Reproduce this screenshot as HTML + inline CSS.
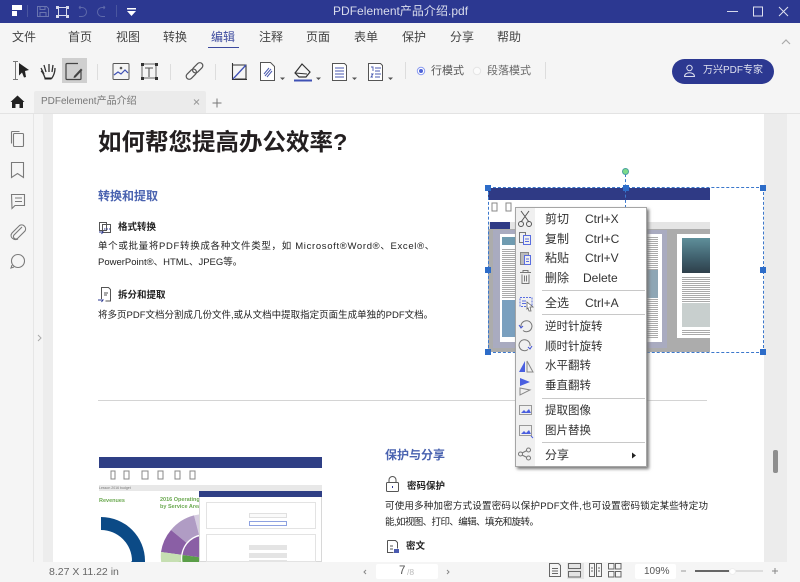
<!DOCTYPE html>
<html><head><meta charset="utf-8"><style>
html,body{margin:0;padding:0}
body{width:800px;height:582px;position:relative;overflow:hidden;background:#f5f5f5;font-family:"Liberation Sans","Noto Sans CJK SC",sans-serif;color:#333}
.a{position:absolute;white-space:nowrap}
.m{top:29px;font-size:12px;line-height:17px;color:#444}
svg{position:absolute;overflow:visible}
.c{left:545px;font-size:12px;line-height:16px;color:#333}
.k{font-size:12px;line-height:16px;color:#333}
.sep{position:absolute;left:542px;width:103px;height:1px;background:#c8c8c8}
.h{position:absolute;width:6px;height:6px;background:#2d6cc8}
.p{font-size:9.5px;line-height:17px;color:#222}
.s{font-size:9.5px;line-height:17px;font-weight:bold;color:#222}
.ln{background-image:repeating-linear-gradient(#fff 0 1px,#aaa 1px 2px)}
</style></head><body>

<!-- title bar -->
<div class="a" style="left:0;top:0;width:800px;height:23px;background:#2c3891"></div>
<svg style="left:0;top:0" width="800" height="24" fill="none">
<path d="M12 5h10v5H12zM12 11h5v5h-5z" fill="#fff"/>
<path d="M27.500 5v12M116.500 5v12" stroke="#4a569f"/>
<path d="M37.500 6.500h9l2 2v8h-11zM40 6.500v3h5v-3M40 16.500v-4h6v4" stroke="#6a75b0"/>
<path d="M58 7.500h9M58 15.500h9M58.500 7v9M66.500 7v9" stroke="#d8dbec"/>
<path d="M56 6h3v3h-3zM66 6h3v3h-3zM56 15h3v3h-3zM66 15h3v3h-3z" fill="#d8dbec"/>
<path d="M79 7.500h3a4.500 4.500 0 0 1 0 9h-3M79 7.500l1.500-1.500M79 7.500l1.500 1.500" stroke="#5e69aa"/>
<path d="M105 7.500h-3a4.500 4.500 0 0 0 0 9h3M105 7.500l-1.500-1.500M105 7.500l-1.500 1.500" stroke="#5e69aa"/>
<path d="M127 8h9v1.500h-9zM127 11h9l-4.500 5z" fill="#fff"/>
<path d="M727 11.500h11" stroke="#d5d8ea"/>
<rect x="753.500" y="7" width="9" height="9" stroke="#dfe1ef"/>
<path d="M779 7l9 9M788 7l-9 9" stroke="#dfe1ef"/>
</svg>
<div class="a" style="left:333px;top:3px;font-size:12px;line-height:17px;letter-spacing:.02px;color:#d9dcec">PDFelement产品介绍.pdf</div>

<!-- menu -->
<div class="a m" style="left:12px">文件</div>
<div class="a m" style="left:68px">首页</div>
<div class="a m" style="left:116px">视图</div>
<div class="a m" style="left:163px">转换</div>
<div class="a m" style="left:211px;color:#3d4a9e">编辑</div>
<div class="a" style="left:208px;top:47px;width:31px;height:1px;background:#3d4a9e"></div>
<div class="a m" style="left:259px">注释</div>
<div class="a m" style="left:306px">页面</div>
<div class="a m" style="left:354px">表单</div>
<div class="a m" style="left:402px">保护</div>
<div class="a m" style="left:450px">分享</div>
<div class="a m" style="left:497px">帮助</div>
<svg style="left:780px;top:38px" width="16" height="10" fill="none"><path d="M2 6l4-4 4 4" stroke="#aaa" stroke-width="1.200"/></svg>

<!-- toolbar -->
<div class="a" style="left:62px;top:58px;width:25px;height:25px;background:#cfcfcf"></div>
<svg style="left:0;top:50px" width="620" height="40" fill="none">
<path d="M15.500 12v17M13 11.500h5M13 29.500h5" stroke="#777"/>
<path d="M19 13l10 7-4 1 1 6-2 .5-2-5-3 3z" fill="#222"/>
<path d="M41 21c2 1 3 4 4 7 1 1 6 1 7 0 2-3 3-7 3-10M44 24l-3-6M46 22l-2-7M49 22v-8M52 22l1-7" stroke="#333" stroke-width="1.300"/>
<path d="M44.500 28.500h7" stroke="#222" stroke-width="2"/>
<path d="M78 13.500H67a1 1 0 0 0-1 1v14a1 1 0 0 0 1 1h13a1 1 0 0 0 1-1v-8" stroke="#444" stroke-width="1.200"/>
<path d="M74 26l7-7.500 1.500 1.500-7 7.500-2 .5z" fill="#444"/>
<path d="M97.500 14v16M170.500 14v16M215.500 14v16" stroke="#ddd"/>
<rect x="113" y="13.500" width="16" height="16" rx="1" stroke="#555"/>
<path d="M114 25l4-3 3 2 4-4 3 3" stroke="#3f51b5" stroke-width="1.200"/><circle cx="121" cy="18" r="1.300" fill="#555"/>
<path d="M142 14h14M142 28h14M142 14v14M156 14v14" stroke="#666"/>
<path d="M141 13h3v3h-3zM155 13h3v3h-3zM141 27h3v3h-3zM155 27h3v3h-3z" fill="#333"/>
<path d="M145 18h8M149 18v9" stroke="#555" stroke-width="1.100"/>
<g transform="rotate(-45 194.500 21)" stroke="#555" stroke-width="1.200"><rect x="184" y="18" width="12" height="6" rx="3"/><rect x="193" y="18" width="12" height="6" rx="3"/></g>
<path d="M232 15h14v14M235 29h11M232.500 13v16.500H247" stroke="#333" stroke-width="1.100"/>
<path d="M233 29l13-14" stroke="#3f51b5" stroke-width="1.300"/>
<path d="M260.500 12.500h10l4 4v14h-14z" stroke="#555" fill="#fff"/>
<path d="M264 24l5-6M265 26l6-7M267 27l5-6" stroke="#4a5ab0"/>
<path d="M295 23l7-9 8 8-4 5h-7z" stroke="#333" stroke-width="1.200"/>
<path d="M295 23l12 1" stroke="#333"/>
<path d="M294 30.500h18" stroke="#3f51b5" stroke-width="2"/>
<path d="M332.500 13.500h12l2 2v15h-14z" stroke="#555" fill="#fff"/>
<path d="M335 18h9M335 21h9M335 24h9M335 27h9" stroke="#4a5ab0"/>
<path d="M368.500 13.500h12l2 2v15h-14z" stroke="#555" fill="#fff"/>
<path d="M375 18h6M375 21h5M375 24h6M375 27h5" stroke="#4a5ab0"/>
<path d="M371 17h2v4M371 24h2l-2 3h2" stroke="#4a5ab0" stroke-width=".9"/>
<path d="M280 27.500h5l-2.500 2.500zM316 27.500h5l-2.500 2.500zM352 27.500h5l-2.500 2.500zM388 27.500h5l-2.500 2.500z" fill="#555"/>
<path d="M405.500 12v17M545.500 12v17" stroke="#ddd"/>
<circle cx="421" cy="21" r="3.700" stroke="#8b9cf0" fill="#fff"/><circle cx="421" cy="21" r="2" fill="#4e63d6"/>
<circle cx="477" cy="21" r="3.700" stroke="#e5e5e5" fill="#fbfbfb"/>
</svg>
<div class="a" style="left:431px;top:63px;font-size:11px;line-height:17px;color:#555">行模式</div>
<div class="a" style="left:487px;top:63px;font-size:11px;line-height:17px;color:#666">段落模式</div>
<div class="a" style="left:672px;top:59px;width:102px;height:25px;border-radius:13px;background:#2c3891"></div>
<svg style="left:683px;top:64px" width="14" height="14" fill="none" stroke="#d8dbec"><circle cx="6.500" cy="4" r="2.700"/><path d="M1.500 12.500c0-5 10-5 10 0z"/></svg>
<div class="a" style="left:703px;top:63px;font-size:10px;line-height:16px;color:#dfe1ef">万兴PDF专家</div>

<!-- tabs -->
<svg style="left:10px;top:94px" width="16" height="16"><path d="M0.500 8L7.500 1.500 14.500 8H13v6H9.500v-4h-4v4H2V8z" fill="#222"/></svg>
<div class="a" style="left:34px;top:91px;width:172px;height:22px;background:#ebebeb;border-radius:2px 2px 0 0"></div>
<div class="a" style="left:41px;top:94px;font-size:10px;line-height:16px;color:#777">PDFelement产品介绍</div>
<svg style="left:193px;top:98px" width="40" height="10" fill="none"><path d="M1 1.500l5 5M6 1.500l-5 5" stroke="#999"/><path d="M24 0.500v9M19.500 5h9" stroke="#777"/></svg>

<!-- work area -->
<div class="a" style="left:0;top:113px;width:800px;height:1px;background:#e3e3e3"></div>
<div class="a" style="left:33px;top:114px;width:1px;height:448px;background:#e6e6e6"></div>
<div class="a" style="left:34px;top:114px;width:9px;height:448px;background:#f5f5f5"></div>
<div class="a" style="left:43px;top:114px;width:10px;height:448px;background:#ededed"></div>
<div class="a" style="left:53px;top:114px;width:711px;height:448px;background:#fff"></div>
<div class="a" style="left:764px;top:114px;width:23px;height:448px;background:#ececec"></div>
<div class="a" style="left:787px;top:114px;width:13px;height:448px;background:#f5f5f5"></div>
<div class="a" style="left:773px;top:450px;width:5px;height:23px;background:#8e8e8e;border-radius:2px"></div>
<svg style="left:37px;top:334px" width="6" height="8" fill="none"><path d="M1 1l3 3-3 3" stroke="#aaa"/></svg>

<!-- side icons -->
<svg style="left:8px;top:128px" width="20" height="140" fill="none" stroke="#7a7a7a" stroke-width="1.100">
<path d="M3.500 3.500h8M3.500 3.500v12"/><rect x="5.500" y="5.500" width="10" height="13" rx="1"/>
<path d="M3.500 34.500h12v15l-6-4-6 4z"/>
<path d="M3.500 66.500h13v11H7l-3 3z"/><path d="M7 70h7M7 73.500h7"/>
<path d="M14 99L6 107a2.500 2.500 0 0 0 3.500 3.500L17 103a4 4 0 0 0-5.500-5.500L4 105c-3 4 2 8 6 6" />
<circle cx="10" cy="133" r="6.500"/><path d="M4 137l-1 3 3-1"/>
</svg>

<!-- page left content -->
<div class="a" style="left:98px;top:127px;font-size:23.500px;line-height:30px;font-weight:bold;color:#231f20">如何帮您提高办公效率?</div>
<div class="a" style="left:98px;top:187px;font-size:12px;line-height:18px;font-weight:bold;color:#4a63b0">转换和提取</div>
<svg style="left:98px;top:219px" width="16" height="90" fill="none" stroke="#555">
<path d="M1.500 3.500h7v8h-7zM4.500 5.500h8v8h-8z" fill="#fff"/><path d="M6 10h6" stroke="#2c3891" stroke-dasharray="1.500 1"/><path d="M1 13h4l-1.500 2" stroke="#2c3891"/>
<path d="M3.500 80v-11.500h7l2 2v11.500h-5"/><path d="M6 74h4M6 76h3"/><path d="M0 81h5l-1.500 2" stroke="#2c3891"/>
</svg>
<div class="a s" style="left:118px;top:219px">格式转换</div>
<div class="a p" style="left:98px;top:238px;letter-spacing:.67px">单个或批量将PDF转换成各种文件类型，如 Microsoft®Word®、Excel®、</div>
<div class="a p" style="left:98px;top:254px">PowerPoint®、HTML、JPEG等。</div>
<div class="a s" style="left:118px;top:287px">拆分和提取</div>
<div class="a p" style="left:98px;top:307px">将多页PDF文档分割成几份文件,或从文档中提取指定页面生成单独的PDF文档。</div>

<div class="a" style="left:98px;top:400px;width:609px;height:1px;background:#d4d4d4"></div>

<!-- lower right content -->
<div class="a" style="left:385px;top:446px;font-size:12px;line-height:18px;font-weight:bold;color:#4a63b0">保护与分享</div>
<svg style="left:385px;top:476px" width="16" height="80" fill="none" stroke="#555">
<rect x="1.500" y="6.500" width="12" height="9" rx="1"/><path d="M4 6.500V4a3.500 3.500 0 0 1 7 0v2.500"/><path d="M7.500 10v2" stroke="#2c3891"/>
<path d="M2.500 64.500h8l2 2v6M2.500 64.500v12h6"/><path d="M5 70h3M5 73h3"/><rect x="9" y="73" width="5" height="4" fill="#4a5ab0" stroke="none"/>
</svg>
<div class="a s" style="left:407px;top:478px">密码保护</div>
<div class="a p" style="left:385px;top:498px;letter-spacing:.2px">可使用多种加密方式设置密码以保护PDF文件,也可设置密码锁定某些特定功</div>
<div class="a p" style="left:385px;top:514px;letter-spacing:-.6px">能,如视图、打印、编辑、填充和旋转。</div>
<div class="a s" style="left:406px;top:538px">密文</div>

<!-- lower-left embedded image -->
<div class="a" style="left:99px;top:457px;width:223px;height:105px;background:#fff;overflow:hidden">
 <div class="a" style="left:0;top:0;width:223px;height:11px;background:#2f3f85"></div>
 <div class="a" style="left:0;top:28px;width:223px;height:6px;background:#e8e8e8"></div>
 <div class="a" style="left:0;top:29px;font-size:3.500px;line-height:5px;color:#777">Lesson 2016 budget</div>
 <svg style="left:0;top:11px" width="223" height="18" fill="none" stroke="#888"><path d="M12 3h4v8h-4zM25 3h5v8h-5zM43 3h6v8h-6zM59 3h5v8h-5zM76 3h5v8h-5zM91 3h5v8h-5z"/></svg>
 <div class="a" style="left:0;top:40px;font-size:5.500px;line-height:8px;font-weight:bold;color:#6aa84f">Revenues</div>
 <div class="a" style="left:61px;top:40px;font-size:5.500px;line-height:7px;font-weight:bold;color:#6aa84f">2016 Operating<br>by Service Area</div>
 <svg style="left:0;top:0" width="223" height="105">
  <path d="M2 60A44 44 0 0 1 46 104L46 105H32L33 104A31 31 0 0 0 2 73z" fill="#0b4a86"/>
  <path d="M106 101L106 57A44 44 0 0 0 95 58.400z" fill="#d6cde0"/>
  <path d="M106 101L95 58.400A44 44 0 0 0 72 73z" fill="#b09cc4"/>
  <path d="M106 101L72 73A44 44 0 0 0 62 95z" fill="#8a5fa5"/>
  <path d="M106 101L62 95A44 44 0 0 0 62.500 107z" fill="#c6dfb2"/>
  <path d="M106 101L62.500 107A44 44 0 0 0 68 125z" fill="#a9d08e"/>
  <circle cx="106" cy="101" r="24" fill="#fff"/>
  <path d="M106 101V78.500A22.500 22.500 0 0 0 83.500 98z" fill="#8a5fa5"/>
  <path d="M106 101L83.500 98A22.500 22.500 0 0 0 88 115z" fill="#5a9e48"/>
 </svg>
 <div class="a" style="left:100px;top:34px;width:123px;height:71px;background:#fff;border:1px solid #d8d8d8;box-sizing:border-box"></div>
 <div class="a" style="left:100px;top:34px;width:123px;height:6px;background:#2f3f85"></div>
 <div class="a" style="left:107px;top:45px;width:110px;height:27px;border:1px solid #e3e3e3;box-sizing:border-box"></div>
 <div class="a" style="left:150px;top:56px;width:38px;height:5px;box-sizing:border-box;border:1px solid #e0e0e0;background:#fafafa"></div>
 <div class="a" style="left:150px;top:64px;width:38px;height:5px;box-sizing:border-box;border:1px solid #8ea2e0;background:#fff"></div>
 <div class="a" style="left:107px;top:77px;width:110px;height:28px;border:1px solid #e3e3e3;box-sizing:border-box"></div>
 <div class="a" style="left:150px;top:88px;width:38px;height:5px;background:#e4e4e4"></div>
 <div class="a" style="left:150px;top:96px;width:38px;height:5px;background:#e4e4e4"></div>
 <div class="a" style="left:150px;top:103px;width:38px;height:2px;background:#e4e4e4"></div>
</div>

<!-- selected image -->
<div class="a" style="left:488px;top:188px;width:222px;height:164px;background:#acacac;overflow:hidden">
 <div class="a" style="left:0;top:0;width:222px;height:12px;background:#2f3a85"></div>
 <div class="a" style="left:0;top:12px;width:222px;height:22px;background:#fff"></div>
 <div class="a" style="left:0;top:34px;width:222px;height:7px;background:#e5e5e5"></div>
 <div class="a" style="left:2px;top:34px;width:20px;height:7px;background:#2f3a85"></div>
 <svg style="left:0;top:12px" width="40" height="20" fill="none" stroke="#888"><path d="M4 3h5v8H4zM18 3h5v8h-5z"/></svg>
 <div class="a" style="left:5px;top:42px;width:174px;height:118px;background:#a9abc0"></div>
 <div class="a" style="left:12px;top:46px;width:162px;height:108px;background:#fff"></div>
 <div class="a ln" style="left:14px;top:60px;width:14px;height:50px"></div>
 <div class="a" style="left:14px;top:49px;width:13px;height:8px;background:#6f9bb0"></div>
 <div class="a" style="left:14px;top:112px;width:13px;height:37px;background:#7aa0bf"></div>
 <div class="a ln" style="left:157px;top:48px;width:13px;height:34px"></div>
 <div class="a" style="left:157px;top:82px;width:13px;height:28px;background:#8ea6b5"></div>
 <div class="a ln" style="left:157px;top:110px;width:13px;height:40px"></div>
 <div class="a" style="left:189px;top:46px;width:33px;height:104px;background:#fff"></div>
 <div class="a" style="left:194px;top:50px;width:28px;height:35px;background:linear-gradient(#5f8f9a 0,#41626f 55%,#2e3f4a 100%)"></div>
 <div class="a ln" style="left:194px;top:88px;width:28px;height:26px"></div>
 <div class="a" style="left:194px;top:115px;width:28px;height:24px;background:#c8cfce"></div>
 <div class="a ln" style="left:194px;top:141px;width:28px;height:6px"></div>
</div>
<!-- selection frame -->
<div class="a" style="left:488px;top:187px;width:274px;height:164px;border:1px dashed #3c78cc;"></div>
<div class="a" style="left:625px;top:174px;height:34px;width:0;border-left:1px dashed #3c78cc"></div>
<div class="a" style="left:622px;top:168px;width:5px;height:5px;border-radius:50%;background:#7ddc8a;border:1px solid #4aa0a0"></div>
<div class="h" style="left:485px;top:185px"></div>
<div class="h" style="left:623px;top:185px"></div>
<div class="h" style="left:760px;top:185px"></div>
<div class="h" style="left:485px;top:267px"></div>
<div class="h" style="left:760px;top:267px"></div>
<div class="h" style="left:485px;top:349px"></div>
<div class="h" style="left:760px;top:349px"></div>

<!-- context menu -->
<div class="a" style="left:515px;top:207px;width:130px;height:258px;background:#fff;border:1px solid #a5a5a5;box-shadow:2px 2px 3px #777"></div>
<div class="a" style="left:516px;top:208px;width:19px;height:258px;background:#f0f0f0"></div>
<div class="a c" style="top:211px">剪切</div><div class="a k" style="left:585px;top:211px">Ctrl+X</div>
<div class="a c" style="top:231px">复制</div><div class="a k" style="left:585px;top:231px">Ctrl+C</div>
<div class="a c" style="top:250px">粘贴</div><div class="a k" style="left:585px;top:250px">Ctrl+V</div>
<div class="a c" style="top:270px">删除</div><div class="a k" style="left:583px;top:270px">Delete</div>
<div class="sep" style="top:290px"></div>
<div class="a c" style="top:295px">全选</div><div class="a k" style="left:585px;top:295px">Ctrl+A</div>
<div class="sep" style="top:314px"></div>
<div class="a c" style="top:319px;font-size:11.500px">逆时针旋转</div>
<div class="a c" style="top:339px;font-size:11.500px">顺时针旋转</div>
<div class="a c" style="top:358px;font-size:11.500px">水平翻转</div>
<div class="a c" style="top:378px;font-size:11.500px">垂直翻转</div>
<div class="sep" style="top:398px"></div>
<div class="a c" style="top:403px;font-size:11.500px">提取图像</div>
<div class="a c" style="top:423px;font-size:11.500px">图片替换</div>
<div class="sep" style="top:442px"></div>
<div class="a c" style="top:447px">分享</div>
<svg style="left:631px;top:452px" width="6" height="7"><path d="M1 .5l4 3-4 3z" fill="#222"/></svg>
<svg style="left:516px;top:209px" width="19" height="256" fill="none" stroke="#777">
<path d="M5 2l8 11M13 2L5 13" stroke="#555"/><circle cx="5" cy="15" r="2.500" stroke="#555"/><circle cx="13" cy="15" r="2.500" stroke="#555"/>
<path d="M3.500 23.500h6v10h-6z"/><rect x="7.500" y="26.500" width="7" height="9" stroke="#5a6ee0" fill="#f0f0f0"/><path d="M9 30h4M9 32.500h4" stroke="#5a6ee0"/>
<path d="M4.500 43.500h8v12h-8z" fill="#bbb" stroke="#888"/><rect x="8.500" y="46.500" width="6" height="9" fill="#f0f0f0" stroke="#5a6ee0"/><path d="M10 50h3M10 52.500h3" stroke="#5a6ee0"/>
<path d="M4 63.500h11M6 65.500v9h7v-9M8.500 66.500v6M10.500 66.500v6M7 63v-1.500h5V63"/>
<path d="M4 88.500h12v9H4z" stroke="#5a6ee0" stroke-dasharray="2 1"/><path d="M6 92h4M6 94.500h4" stroke="#5a6ee0"/><path d="M11 93l6 5-3 0 1 4-2 0-1-3-1 1z" fill="#fff" stroke="#666" stroke-width=".8"/>
<path d="M5 118a5.500 5.500 0 1 1 2 3.500" stroke="#777"/><path d="M3 116l2 3 2-2" stroke="#3f51d5"/>
<path d="M14 137a5.500 5.500 0 1 0-2 3.500" stroke="#777"/><path d="M16 137l-2 3-2-2" stroke="#3f51d5"/>
<path d="M9 152v11H3z" fill="#4a5fe0" stroke="none"/><path d="M11 152v11h6z" stroke="#888"/>
<path d="M4 169v8l10-4z" fill="#4a5fe0" stroke="none"/><path d="M4 179v7l10-5z" stroke="#888"/>
<rect x="3.500" y="196.500" width="12" height="9" stroke="#999" /><path d="M5 204l3-3 2 2 3-3 2 4z" fill="#4a5fe0" stroke="none"/>
<rect x="3.500" y="216.500" width="12" height="10" stroke="#999"/><path d="M5 225l3-3 2 2 3-3 2 4z" fill="#4a5fe0" stroke="none"/><path d="M15 227l2 2" stroke="#4a5fe0"/>
<circle cx="4.500" cy="245" r="2"/><circle cx="12.500" cy="241" r="2"/><circle cx="12.500" cy="249" r="2"/><path d="M6 244l5-2.500M6 246l5 2.500"/>
</svg>

<!-- status bar -->
<div class="a" style="left:0;top:562px;width:800px;height:20px;background:#f5f5f5"></div>
<div class="a" style="left:49px;top:564px;font-size:10.500px;line-height:16px;color:#666">8.27 X 11.22 in</div>
<svg style="left:362px;top:567px" width="10" height="10" fill="none"><path d="M4 3L2 5l2 2" stroke="#888"/></svg>
<div class="a" style="left:376px;top:564px;width:62px;height:15px;background:#fff;border-radius:2px"></div>
<div class="a" style="left:399px;top:563px;font-size:11.500px;line-height:17px;color:#555">7</div>
<div class="a" style="left:407px;top:565px;font-size:8.500px;line-height:15px;color:#bbb">/8</div>
<svg style="left:445px;top:567px" width="10" height="10" fill="none"><path d="M2 3l2 2-2 2" stroke="#888"/></svg>
<div class="a" style="left:567px;top:563px;width:17px;height:16px;background:#e4e4e4"></div>
<svg style="left:548px;top:562px" width="232" height="18" fill="none" stroke="#666">
<path d="M1.500 1.500h9l2 2v11h-11zM4 6.500h6M4 9h6M4 11.500h6"/>
<rect x="20.500" y="1.500" width="12" height="5"/><rect x="20.500" y="9.500" width="12" height="5.500"/>
<rect x="41.500" y="1.500" width="5" height="13"/><rect x="48.500" y="1.500" width="5" height="13"/><path d="M43 6h2M43 9h2M50 6h2M50 9h2"/>
<rect x="60.500" y="1.500" width="5.500" height="5.500"/><rect x="67.500" y="1.500" width="5.500" height="5.500"/><rect x="60.500" y="9.500" width="5.500" height="5.500"/><rect x="67.500" y="9.500" width="5.500" height="5.500"/>
<path d="M133 9h5" stroke="#999"/><path d="M224 9h6M227 6v6" stroke="#888"/>
</svg>
<div class="a" style="left:635px;top:564px;width:41px;height:15px;background:#fff;border-radius:2px"></div>
<div class="a" style="left:644px;top:564px;font-size:10px;line-height:15px;color:#555">109%</div>
<div class="a" style="left:695px;top:570px;width:68px;height:2px;background:#ddd"></div>
<div class="a" style="left:695px;top:570px;width:34px;height:2px;background:#666"></div>
<div class="a" style="left:729px;top:568px;width:5px;height:5px;background:#fff;border-radius:50%;border:1px solid #eee"></div>
</body></html>
